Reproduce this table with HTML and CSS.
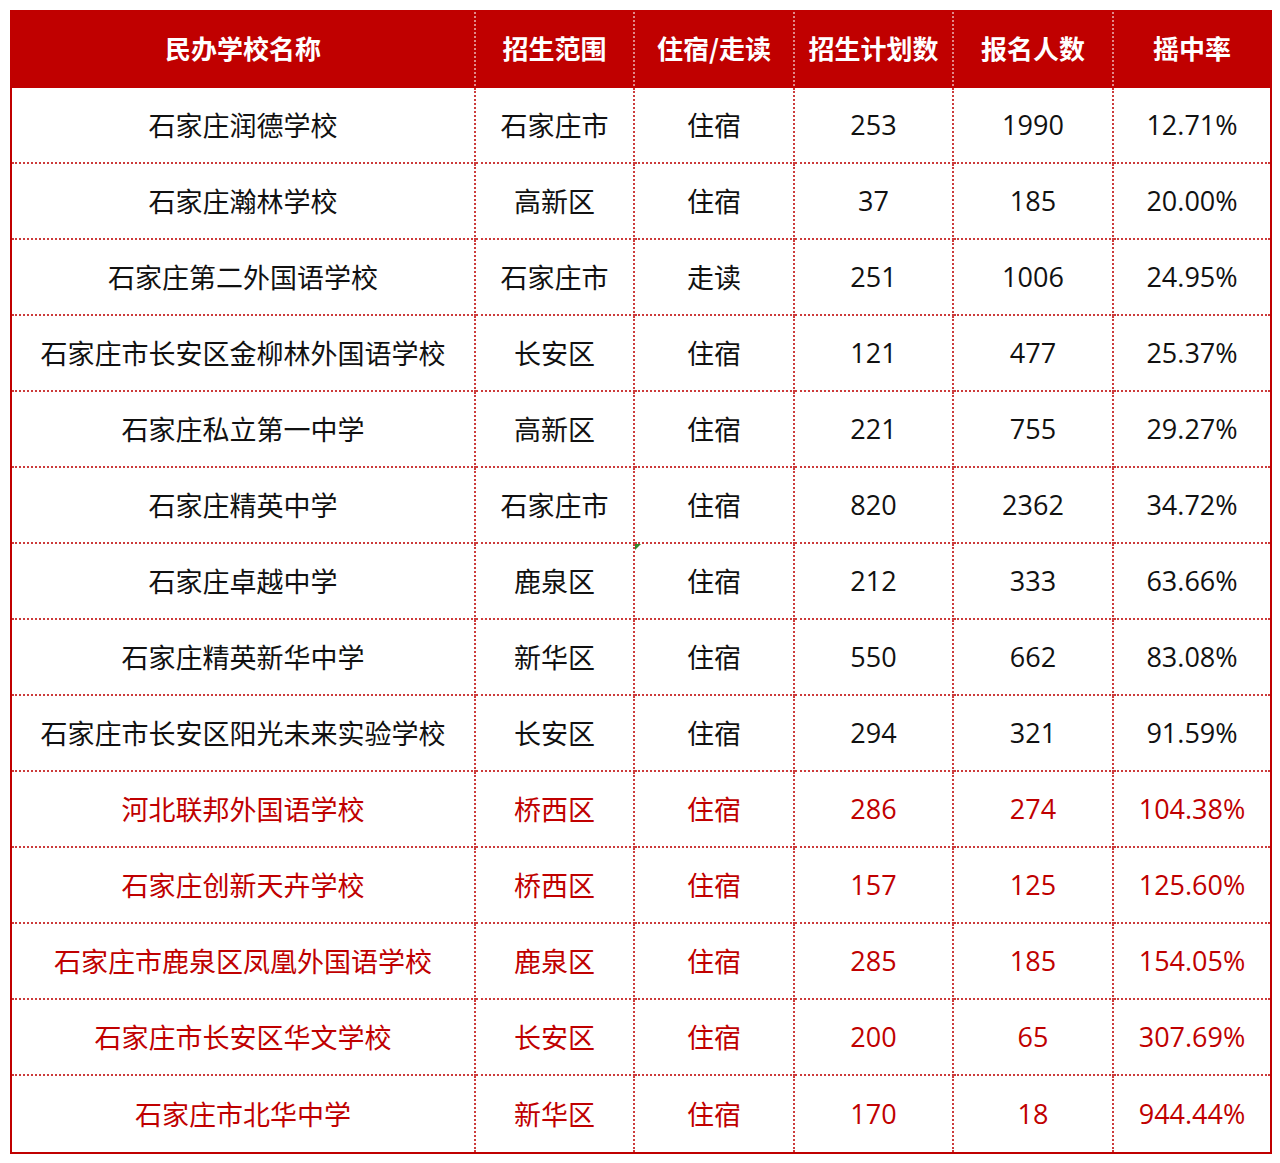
FILE: index.html
```html
<!DOCTYPE html>
<html lang="zh-CN">
<head>
<meta charset="utf-8">
<link rel="stylesheet" href="styles.css">
</head>
<body>
<div class="wrap">
<table class="grid">
<colgroup>
<col class="c1"><col class="c2"><col class="c3"><col class="c4"><col class="c5"><col class="c6">
</colgroup>
<thead>
<tr><th>民办学校名称</th><th>招生范围</th><th>住宿/走读</th><th>招生计划数</th><th>报名人数</th><th>摇中率</th></tr>
</thead>
<tbody>
<tr><td>石家庄润德学校</td><td>石家庄市</td><td>住宿</td><td>253</td><td>1990</td><td>12.71%</td></tr>
<tr><td>石家庄瀚林学校</td><td>高新区</td><td>住宿</td><td>37</td><td>185</td><td>20.00%</td></tr>
<tr><td>石家庄第二外国语学校</td><td>石家庄市</td><td>走读</td><td>251</td><td>1006</td><td>24.95%</td></tr>
<tr><td>石家庄市长安区金柳林外国语学校</td><td>长安区</td><td>住宿</td><td>121</td><td>477</td><td>25.37%</td></tr>
<tr><td>石家庄私立第一中学</td><td>高新区</td><td>住宿</td><td>221</td><td>755</td><td>29.27%</td></tr>
<tr><td>石家庄精英中学</td><td>石家庄市</td><td>住宿</td><td>820</td><td>2362</td><td>34.72%</td></tr>
<tr><td>石家庄卓越中学</td><td>鹿泉区</td><td class="flag">住宿</td><td>212</td><td>333</td><td>63.66%</td></tr>
<tr><td>石家庄精英新华中学</td><td>新华区</td><td>住宿</td><td>550</td><td>662</td><td>83.08%</td></tr>
<tr><td>石家庄市长安区阳光未来实验学校</td><td>长安区</td><td>住宿</td><td>294</td><td>321</td><td>91.59%</td></tr>
<tr class="hot"><td>河北联邦外国语学校</td><td>桥西区</td><td>住宿</td><td>286</td><td>274</td><td>104.38%</td></tr>
<tr class="hot"><td>石家庄创新天卉学校</td><td>桥西区</td><td>住宿</td><td>157</td><td>125</td><td>125.60%</td></tr>
<tr class="hot"><td>石家庄市鹿泉区凤凰外国语学校</td><td>鹿泉区</td><td>住宿</td><td>285</td><td>185</td><td>154.05%</td></tr>
<tr class="hot"><td>石家庄市长安区华文学校</td><td>长安区</td><td>住宿</td><td>200</td><td>65</td><td>307.69%</td></tr>
<tr class="hot"><td>石家庄市北华中学</td><td>新华区</td><td>住宿</td><td>170</td><td>18</td><td>944.44%</td></tr>
</tbody>
</table>
</div>
</body>
</html>
```
FILE: styles.css
```css
html, body {
  margin: 0;
  padding: 0;
  background: #ffffff;
}
.wrap {
  padding: 10px 10px 0 10px;
}
.grid {
  width: 1260px;
  border-collapse: collapse;
  table-layout: fixed;
  border: 2px solid #c00000;
  font-family: "Open Sans", "Noto Sans", "Noto Sans CJK SC", sans-serif;
  font-size: 27px;
  color: #111111;
}
.c1 { width: 464px; }
.c2 { width: 159px; }
.c3 { width: 160px; }
.c4 { width: 159px; }
.c5 { width: 160px; }
.c6 { width: 158px; }
.grid th {
  height: 70px;
  background: #c00000;
  color: #ffffff;
  font-family: "Noto Sans CJK SC", sans-serif;
  font-weight: 700;
  font-size: 26px;
  text-align: center;
  padding: 0 0 4px 0;
  border-left: 2px dotted #e08a8a;
  border-bottom: 2px solid #c00000;
}
.grid th:first-child { border-left: none; }
.grid td {
  height: 72px;
  padding: 0 0 2px 0;
  text-align: center;
  border: 2px dotted #cc3b3b;
  font-family: "Open Sans", "Noto Sans CJK SC", sans-serif;
}
.grid td:first-child { border-left: none; }
.grid td:last-child { border-right: none; }
.grid tbody tr:last-child td {
  border-bottom: none;
  height: 74px;
}
.grid tr.hot td { color: #c00000; }
.flag {
  position: relative;
}
.flag::before {
  content: "";
  position: absolute;
  left: 0;
  top: 0;
  border-top: 6px solid #2e8b2e;
  border-right: 6px solid transparent;
}
```
